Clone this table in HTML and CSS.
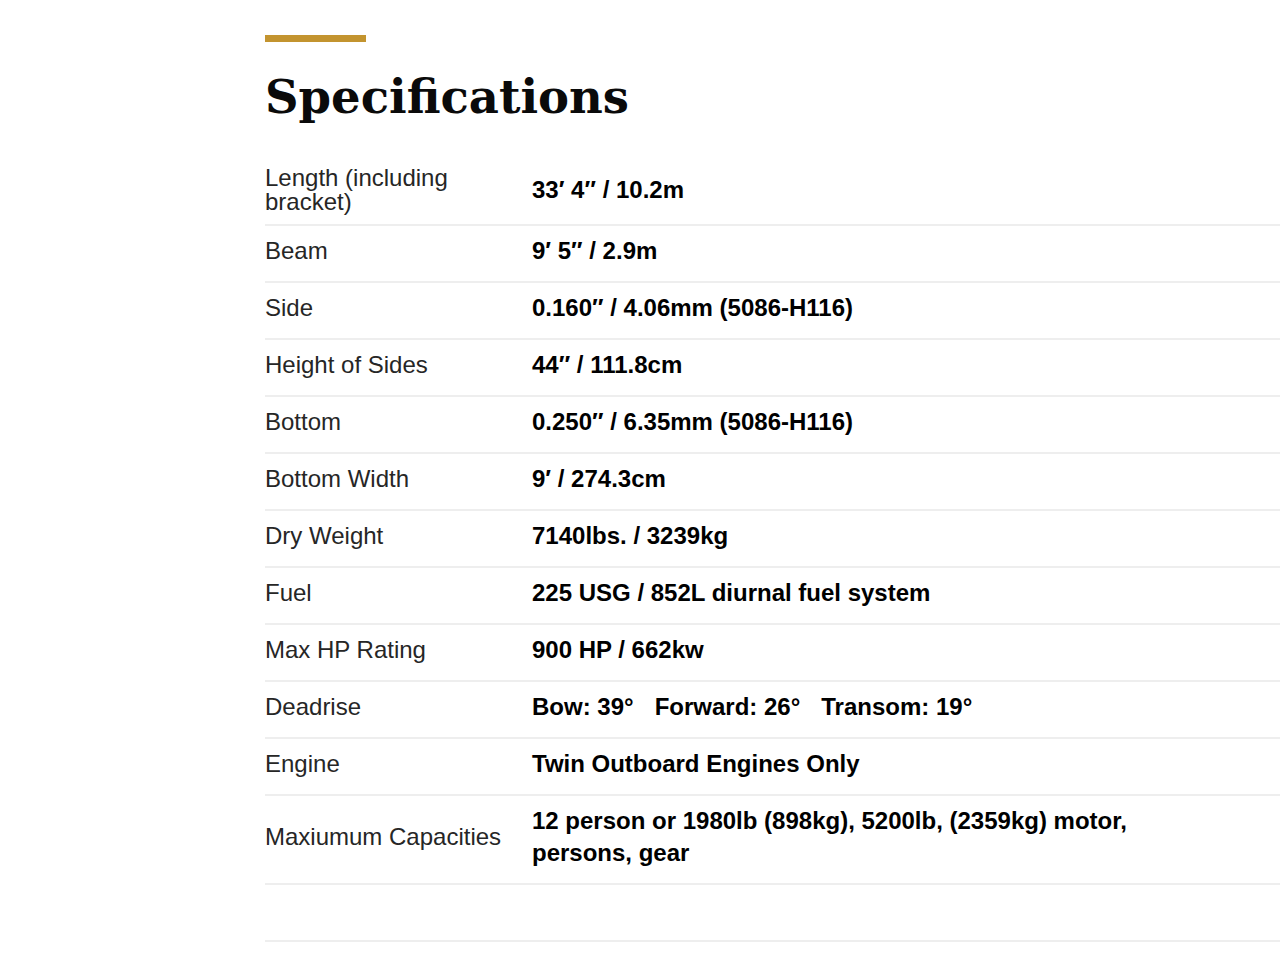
FILE: index.html
```html
<!DOCTYPE html>
<html lang="en">
<head>
<meta charset="utf-8">
<title>Specifications</title>
<link rel="stylesheet" href="styles.css">
</head>
<body>
<section class="specs">
  <div class="accent"></div>
  <h1 class="title">Specifications</h1>
  <table class="spec-table">
    <colgroup><col class="col-label"><col class="col-value"></colgroup>
    <tbody>
      <tr class="first"><td class="label">Length (including bracket)</td><td class="value">33′ 4″ / 10.2m</td></tr>
      <tr><td class="label">Beam</td><td class="value">9′ 5″ / 2.9m</td></tr>
      <tr><td class="label">Side</td><td class="value">0.160″ / 4.06mm (5086-H116)</td></tr>
      <tr><td class="label">Height of Sides</td><td class="value">44″ / 111.8cm</td></tr>
      <tr><td class="label">Bottom</td><td class="value">0.250″ / 6.35mm (5086-H116)</td></tr>
      <tr><td class="label">Bottom Width</td><td class="value">9′ / 274.3cm</td></tr>
      <tr><td class="label">Dry Weight</td><td class="value">7140lbs. / 3239kg</td></tr>
      <tr><td class="label">Fuel</td><td class="value">225 USG / 852L diurnal fuel system</td></tr>
      <tr><td class="label">Max HP Rating</td><td class="value">900 HP / 662kw</td></tr>
      <tr><td class="label">Deadrise</td><td class="value"><span class="part">Bow: 39°</span><span class="part">Forward: 26°</span><span class="part">Transom: 19°</span></td></tr>
      <tr><td class="label">Engine</td><td class="value">Twin Outboard Engines Only</td></tr>
      <tr><td class="label">Maxiumum Capacities</td><td class="value">12 person or 1980lb (898kg), 5200lb, (2359kg) motor, persons, gear</td></tr>
      <tr class="empty"><td class="label">&nbsp;</td><td class="value">&nbsp;</td></tr>
    </tbody>
  </table>
</section>
</body>
</html>
```

FILE: styles.css
```css
html, body {
  margin: 0;
  padding: 0;
  background: #ffffff;
}

body {
  font-family: "Liberation Sans", Arial, sans-serif;
  color: #111;
  overflow: hidden;
}

.specs {
  padding: 35px 0 0 265px;
}

.accent {
  width: 101px;
  height: 7px;
  background: #c3942f;
}

.title {
  margin: 29px 0 0;
  font-family: "DejaVu Serif", "Liberation Serif", serif;
  font-weight: bold;
  font-size: 46.5px;
  line-height: 52px;
  color: #0a0a0a;
}

.spec-table {
  margin-top: 34px;
  width: 100%;
  border-collapse: collapse;
  table-layout: fixed;
}

.col-label {
  width: 267px;
}

.spec-table td {
  padding: 9px 0 14px;
  border-bottom: 2px solid #eeeeee;
  vertical-align: middle;
  font-size: 24px;
}

.spec-table .first td {
  padding-top: 9px;
  padding-bottom: 10px;
}

.label {
  line-height: 24px;
  color: #262626;
}

.spec-table .value {
  line-height: 32px;
  font-weight: bold;
  color: #000;
  padding-right: 130px;
}

.part {
  margin-right: 21px;
}

.part:last-child {
  margin-right: 0;
}
```
